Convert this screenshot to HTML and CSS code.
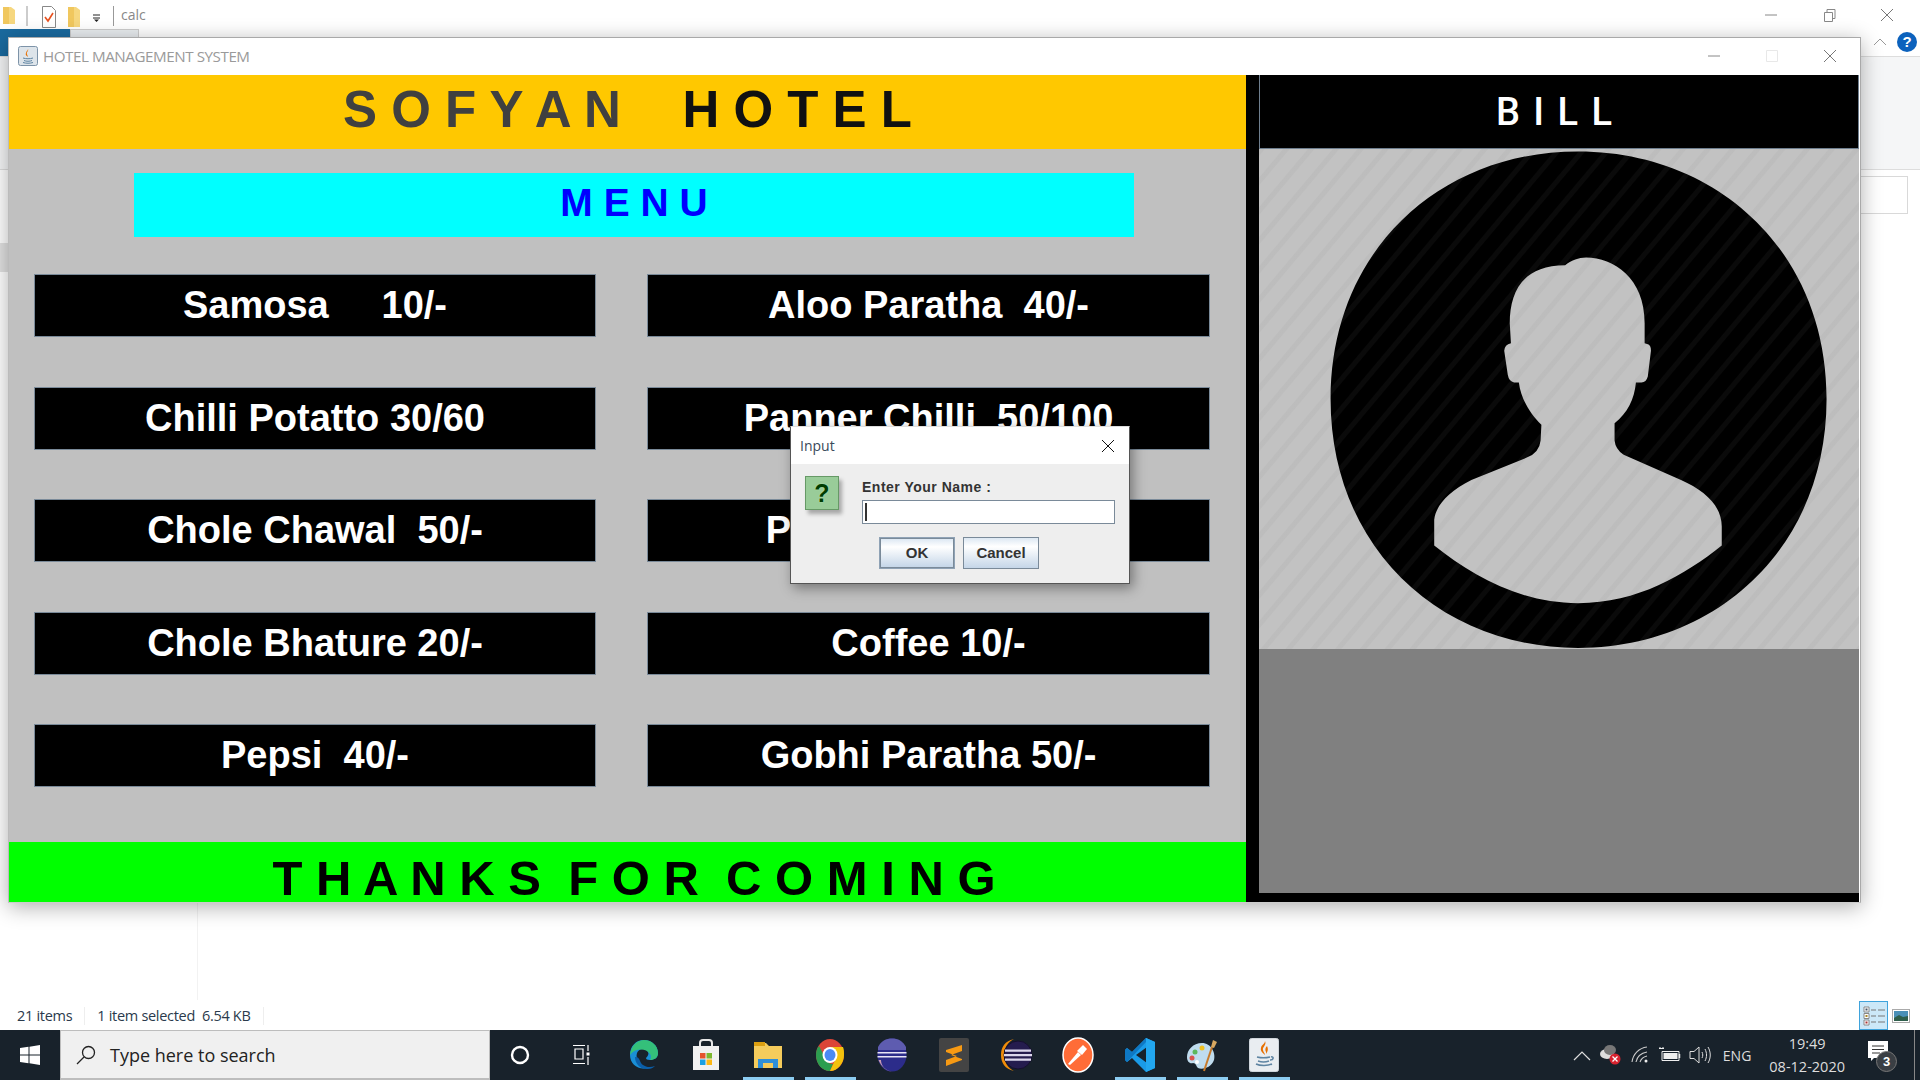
FILE: index.html
```html
<!DOCTYPE html>
<html lang="en">
<head>
<meta charset="utf-8">
<title>HOTEL MANAGEMENT SYSTEM</title>
<link rel="stylesheet" href="styles.css">
</head>
<body>
<div class="screen">
  <div class="explorer">
    <div class="qat">
      <svg class="qat-ico" width="126" height="30" viewBox="0 0 126 30">
        <path d="M3 8h8l4 3v14H3z" fill="#f6d77f"/><path d="M3 8h6v17H3z" fill="#f0c75e"/>
        <path d="M27 7v20" stroke="#999"/>
        <path d="M42.500 7.500h9l4 4v17h-13z" fill="#fff" stroke="#888"/>
        <path d="M45 18l3 4 5-8" fill="none" stroke="#e8501e" stroke-width="1.600"/>
        <path d="M68 8h8l4 3v17H68z" fill="#f6d77f"/><path d="M68 8h6v20h-6z" fill="#f0c75e"/>
        <path d="M93 16h7M93 19h7" stroke="#222"/><path d="M94 20.500h5l-2.500 2.500z" fill="#222"/>
        <path d="M113.500 7v20" stroke="#999"/>
      </svg>
      <span class="qat-name">calc</span>
      <div class="caption">
        <svg width="16" height="16" viewBox="0 0 16 16"><path d="M2 8h12" stroke="#888"/></svg>
        <svg width="16" height="16" viewBox="0 0 16 16"><path d="M3.500 5.500h8v9h-8zM6 5V2.500h8v9h-2" fill="none" stroke="#888"/></svg>
        <svg width="16" height="16" viewBox="0 0 16 16"><path d="M2 2l12 12M14 2L2 14" stroke="#777"/></svg>
      </div>
    </div>
    <div class="ribbon">
      <div class="tab-file"></div>
      <div class="tab-home"></div>
      <div class="ribbon-help">
        <svg width="14" height="10" viewBox="0 0 14 10"><path d="M1 8l6-6 6 6" fill="none" stroke="#999"/></svg>
        <span class="help">?</span>
      </div>
    </div>
    <div class="address"></div>
    <div class="file-pane">
      <div class="nav-pane"><div class="nav-sel"></div></div>
      <div class="file-list"><div class="search-sliver"></div></div>
    </div>
    <div class="status">
      <span class="status-cell">21 items</span>
      <span class="status-cell">1 item selected&nbsp;&nbsp;6.54 KB</span>
      <div class="views">
        <span class="view view-on">
          <svg width="26" height="24" viewBox="0 0 26 24">
            <path d="M3 3h5v5H3zM3 9.500h5v5H3zM3 16h5v5H3z" fill="#fff" stroke="#888"/>
            <path d="M4.500 4.500h2v2h-2z" fill="#456"/><path d="M4.500 11h2v2h-2z" fill="#a82"/><path d="M4.500 17.500h2v2h-2z" fill="#a33"/>
            <path d="M10 6h5M17 6h7M10 12h5M17 12h7M10 18h5M17 18h7" stroke="#777"/>
          </svg>
        </span>
        <span class="view">
          <svg width="18" height="14" viewBox="0 0 18 14">
            <rect x=".5" y=".5" width="17" height="13" fill="#fff" stroke="#aaa"/>
            <rect x="2" y="2" width="14" height="10" fill="#4a90b8"/><path d="M2 9l5-3 4 2 5-1v5H2z" fill="#2f5f4c"/>
          </svg>
        </span>
      </div>
    </div>
  </div>

  <div class="taskbar">
    <div class="start">
      <svg width="20" height="20" viewBox="0 0 20 20"><path d="M0 3l8.500-1.200v7.700H0zM9.500 1.700L20 0v9.500H9.500zM0 10.500h8.500v7.700L0 17zM9.500 10.500H20V20L9.500 18.300z" fill="#fff"/></svg>
    </div>
    <div class="searchbox">
      <svg width="22" height="22" viewBox="0 0 22 22"><circle cx="13.500" cy="8.500" r="6" fill="none" stroke="#222" stroke-width="1.300"/><path d="M9 13l-7 7" stroke="#222" stroke-width="1.300"/></svg>
      <span class="search-text">Type here to search</span>
    </div>
    <div class="slots">
      <span class="slot"><svg width="20" height="20" viewBox="0 0 20 20"><circle cx="10" cy="10" r="8" fill="none" stroke="#fff" stroke-width="2.400"/></svg></span>
      <span class="slot"><svg width="22" height="22" viewBox="0 0 22 22"><path d="M2 1.500h12M4 5h8v10H4zM2 19.500h12M17 1v6M17 13v8" fill="none" stroke="#fff" stroke-width="1.200"/><path d="M15.500 8.500h3v3h-3z" fill="#fff"/></svg></span>
      <span class="slot"><svg width="32" height="32" viewBox="0 0 32 32"><path d="M2 16C2 7 8 1 16 1c8 0 14 6 14 13 0 5-4 7-8 7-3 0-4-1-4-2 2-2 3-4 2-6-2-4-9-4-11 1-2 6 3 14 10 15C10 31 2 25 2 16z" fill="#1a8fd6"/><path d="M2 16C3 6 10 1 16 1c8 0 14 6 14 13 0 5-4 7-8 7 0 0 2-3 0-6-4-6-15-6-20 1z" fill="#34c07a"/><path d="M7 18c0 7 6 13 13 12 3 0 5-1 7-3-5 2-9 1-12-1-4-3-3-9-8-8z" fill="#0b5ea8"/></svg></span>
      <span class="slot"><svg width="32" height="34" viewBox="0 0 32 34"><path d="M10 8V5a3 3 0 013-3h6a3 3 0 013 3v3" fill="none" stroke="#e8e8e8" stroke-width="2"/><path d="M3 8h26v24H3z" fill="#f1f1f1"/><path d="M10 15h5.500v5.500H10z" fill="#e5532d"/><path d="M16.500 15H22v5.500h-5.500z" fill="#7cb82f"/><path d="M10 21.500h5.500V27H10z" fill="#19a0e3"/><path d="M16.500 21.500H22V27h-5.500z" fill="#fdb813"/></svg></span>
      <span class="slot slot-on"><svg width="30" height="28" viewBox="0 0 30 28"><path d="M1 2h12l3 3h13v22H1z" fill="#f5cc5c"/><path d="M1 1h11v4H1z" fill="#dc9f10"/><path d="M5 27v-9h20v9h-5v-5h-10v5z" fill="#2f8fd8"/><path d="M10 27v-5h10v5z" fill="#f5cc5c"/></svg></span>
      <span class="slot slot-on"><svg width="28" height="32" viewBox="0 0 28 32"><ellipse cx="14" cy="16" rx="14" ry="16" fill="#db4437"/><path d="M14 32C6 32 0 25 0 16 0 12 1 9 3 7l8 15c1 2 3 3 6 3l-3 7z" fill="#2b9e4f"/><path d="M14 8h13c1 2 1 5 1 8 0 8-6 16-14 16l6-13c1-3 0-7-6-11z" fill="#f4c20d"/><ellipse cx="14" cy="16" rx="7.500" ry="8" fill="#fff"/><ellipse cx="14" cy="16" rx="5.500" ry="6" fill="#4a8af4"/></svg></span>
      <span class="slot"><svg width="30" height="34" viewBox="0 0 30 34"><ellipse cx="15" cy="17" rx="14.500" ry="16.500" fill="#2c2c8a"/><path d="M1 9C4 3 9 .5 15 .5S26 3 29 9v3H1z" fill="#5e5cb0"/><path d="M.5 14h29v1.600H.5zM.5 18h29v1.600H.5z" fill="#e8e4f4"/><path d="M1.500 22c3 7 8 11 13.500 11.500-7-1-11-6-11-11.500z" fill="#c99cb0"/></svg></span>
      <span class="slot"><svg width="32" height="36" viewBox="0 0 32 36"><rect x="1" y="1" width="30" height="34" rx="2" fill="#444"/><path d="M24 8v6L13 18l11 4v1L8 29v-6l11-4L8 15v-2z" fill="#f89a13"/></svg></span>
      <span class="slot"><svg width="32" height="34" viewBox="0 0 32 34"><path d="M14 1C5 3 1 9 1 17s4 14 13 16C8 30 4 24 4 17S8 4 14 1z" fill="#f08c0a"/><circle cx="18" cy="17" r="14" fill="#251c4e" stroke="#16102e"/><path d="M5 11.500h26v2.300H5zM4 16h28v2.300H4zM5 20.500h26v2.300H5z" fill="#dcd8ec"/></svg></span>
      <span class="slot"><svg width="32" height="36" viewBox="0 0 32 36"><ellipse cx="16" cy="18" rx="15" ry="17" fill="#ff6c37" stroke="#fff" stroke-width="1.500"/><path d="M6 27l10-12 3 3-11 10z" fill="#fff"/><path d="M15 14l6-6 4 4-5 6z" fill="#fff"/></svg></span>
      <span class="slot slot-on"><svg width="30" height="36" viewBox="0 0 30 36"><path d="M21 1l9 4v26l-9 4-14-14-5 4-2-2v-10l2-2 5 4z" fill="#1a9be8"/><path d="M21 1L7 15 2 11 0 13v10l2 2 19-20z" fill="#0e78c4"/><path d="M22 10L11 18l11 8z" fill="#16212b"/><path d="M21 35l9-4V5l-9-4z" fill="#22a7f0"/></svg></span>
      <span class="slot slot-on"><svg width="32" height="34" viewBox="0 0 32 34"><path d="M16 5C7 5 1 12 1 19c0 5 3 7 6 6 3 0 3 3 5 5 4 2 13 0 16-8 2-7-3-17-12-17z" fill="#bfdcee"/><circle cx="9" cy="14" r="2.500" fill="#5cb85c"/><circle cx="16" cy="10" r="2.500" fill="#f0c020"/><circle cx="6" cy="20" r="2.500" fill="#d9534f"/><circle cx="11" cy="24" r="2" fill="#fff"/><path d="M18 33l8-24" stroke="#c77a2a" stroke-width="2"/><path d="M25 9l2-7 4 2-3 6z" fill="#d8a860"/></svg></span>
      <span class="slot slot-on"><svg width="30" height="34" viewBox="0 0 30 34"><rect x=".5" y=".5" width="29" height="33" rx="2" fill="#e9edf1" stroke="#cfd6dc"/><path d="M16 3c2 4-3 6-2 9 0 2 2 3 2 5-2-2-5-4-4-7 0-3 4-4 4-7z" fill="#e76f00"/><path d="M18 8c-2 2-2 4-1 6l0 2c1-2 3-4 1-8z" fill="#e76f00"/><path d="M8 19c4 1 9 1 13 0M9 23c3 1 8 1 11 0M7 26c4 2 12 2 16 0M22 19c3-1 3 3-1 3" fill="none" stroke="#5e84a2" stroke-width="1.500"/></svg></span>
    </div>
    <div class="tray">
      <svg class="tray-ico" width="18" height="12" viewBox="0 0 18 12"><path d="M1 11l8-8 8 8" fill="none" stroke="#ddd" stroke-width="1.200"/></svg>
      <svg class="tray-ico" width="24" height="24" viewBox="0 0 24 24"><ellipse cx="8" cy="11" rx="7" ry="5" fill="#ddd"/><ellipse cx="11" cy="7" rx="6" ry="5" fill="#777"/><circle cx="16" cy="16" r="5.500" fill="#d8232f"/><path d="M13.500 13.500l5 5M18.500 13.500l-5 5" stroke="#fff" stroke-width="1.300"/></svg>
      <svg class="tray-ico" width="20" height="20" viewBox="0 0 20 20"><path d="M1 17C2 9 8 3 16 2M5 17c1-5 5-9 11-10M9 17c1-3 3-5 7-6" fill="none" stroke="#ccc" stroke-width="1.100"/><circle cx="15" cy="16" r="1.500" fill="#eee"/></svg>
      <svg class="tray-ico" width="22" height="16" viewBox="0 0 22 16"><path d="M3 4.500h17v9H3z" fill="#16212b" stroke="#eee"/><path d="M4.500 6h14v6h-14z" fill="#eee"/><path d="M20.500 7v4" stroke="#eee" stroke-width="1.500"/><path d="M0 1.500h5M1 0v2M4 0v2" stroke="#eee"/></svg>
      <svg class="tray-ico" width="22" height="20" viewBox="0 0 22 20"><path d="M1 6.500h4L10 2v16l-5-4.500H1z" fill="none" stroke="#ddd"/><path d="M13 7c1 2 1 4 0 6M16 4c2 4 2 8 0 12M19 2c3 5 3 11 0 16" fill="none" stroke="#ddd"/></svg>
      <span class="lang">ENG</span>
      <div class="clock"><span>19:49</span><span>08-12-2020</span></div>
      <div class="notif">
        <svg width="20" height="20" viewBox="0 0 20 20"><path d="M0 0h20v17H6l-3 3v-3H0z" fill="#fff"/><path d="M4 5h12M4 8.500h12M4 12h8" stroke="#333"/></svg>
        <span class="badge">3</span>
      </div>
    </div>
  </div>

  <div class="window">
    <div class="titlebar">
      <svg width="20" height="20" viewBox="0 0 20 20"><rect x=".5" y=".5" width="19" height="19" rx="2" fill="#dde4ea" stroke="#7d93a8"/><path d="M10 3c1 2-2 3-1 5 0 1 1 2 1 3-1-1-3-2-2-4 0-2 2-2 2-4z" fill="#e76f00"/><path d="M5 12c3 1 7 1 10 0M6 14.500c2 1 6 1 8 0M5 16.500c3 1 7 1 10 0" fill="none" stroke="#5e84a2"/></svg>
      <span class="win-title">HOTEL MANAGEMENT SYSTEM</span>
      <div class="win-caption">
        <svg width="14" height="14" viewBox="0 0 14 14"><path d="M1 7h12" stroke="#888"/></svg>
        <svg width="14" height="14" viewBox="0 0 14 14"><path d="M1.500 1.500h11v11h-11z" fill="none" stroke="#e8e8e8"/></svg>
        <svg width="14" height="14" viewBox="0 0 14 14"><path d="M1 1l12 12M13 1L1 13" stroke="#777"/></svg>
      </div>
    </div>
    <div class="app">
      <div class="left">
        <div class="hotel">S O F Y A N    <b>H O T E L</b></div>
        <div class="body">
          <div class="menu">M E N U</div>
          <div class="items">
            <div class="item">Samosa     10/-</div>
            <div class="item">Aloo Paratha  40/-</div>
            <div class="item">Chilli Potatto 30/60</div>
            <div class="item">Panner Chilli  50/100</div>
            <div class="item">Chole Chawal  50/-</div>
            <div class="item">Palak Paratha 50/-</div>
            <div class="item">Chole Bhature 20/-</div>
            <div class="item">Coffee 10/-</div>
            <div class="item">Pepsi  40/-</div>
            <div class="item">Gobhi Paratha 50/-</div>
          </div>
        </div>
        <div class="thanks">T H A N K S  F O R  C O M I N G</div>
      </div>
      <div class="right">
        <div class="bill">B I L L</div>
        <div class="photo">
          <svg class="avatar" viewBox="23 55 1517 1450" preserveAspectRatio="none">
            <path fill-rule="evenodd" fill="#000" d="M204 780C204 350 480 62 830 62C1180 62 1458 350 1458 780C1458 1210 1180 1502 830 1502C480 1502 204 1210 204 780Z
            M797 392C815 378 830 370 850 370C920 370 998 430 998 560L998 618L1008 622Q1014 626 1014 640L1006 715Q1002 732 990 732L976 732C972 780 955 820 922 850L922 900Q924 925 945 942L1090 1015C1150 1045 1193 1090 1193 1150L1193 1205C1100 1290 980 1372 830 1372C680 1372 560 1290 466 1205L466 1130C470 1090 500 1050 560 1015L700 950Q732 935 735 900L737 855C710 825 685 780 680 732L668 732Q655 730 652 710L643 640Q644 622 660 618L657 560C657 470 690 392 797 392Z"/>
          </svg>
        </div>
        <div class="bill-area"></div>
      </div>
    </div>
  </div>

  <div class="dialog">
    <div class="dlg-title">
      <span>Input</span>
      <svg width="14" height="14" viewBox="0 0 14 14"><path d="M1 1l12 12M13 1L1 13" stroke="#111"/></svg>
    </div>
    <div class="dlg-body">
      <div class="dlg-icon">?</div>
      <div class="dlg-form">
        <div class="dlg-label">Enter Your Name :</div>
        <div class="dlg-input"><i class="caret"></i></div>
        <div class="dlg-buttons">
          <span class="btn btn-focus">OK</span>
          <span class="btn">Cancel</span>
        </div>
      </div>
    </div>
  </div>
</div>
</body>
</html>
```

FILE: styles.css
```css
* { box-sizing: border-box; }
html, body { margin: 0; padding: 0; }
body { font-family: "Liberation Sans", Arial, sans-serif; background: #fff; overflow: hidden; }
.screen { position: relative; width: 1920px; height: 1080px; display: flex; flex-direction: column; }

.explorer { flex: 1; display: flex; flex-direction: column; background: #fff; min-height: 0; }
.qat { height: 29px; display: flex; align-items: center; position: relative; }
.qat-ico { display: block; margin-top: -1px; flex: none; }
.qat-name { font: 14px "Open Sans", sans-serif; color: #888; margin-left: -5px; }
.caption { margin-left: auto; display: flex; gap: 42px; padding-right: 25px; }
.ribbon { height: 28px; display: flex; border-bottom: 1px solid #ddd; }
.tab-file { width: 70px; background: #1a6a9f; }
.tab-home { width: 69px; height: 9px; background: #e8ecef; border: 1px solid #ccc; border-bottom: 0; }
.ribbon-help { margin-left: auto; display: flex; align-items: center; gap: 10px; padding: 0 3px 2px 0; }
.help { width: 20px; height: 20px; border-radius: 50%; background: #0c62bd; color: #fff; font: bold 15px "Liberation Sans", sans-serif; display: flex; align-items: center; justify-content: center; }
.address { height: 113px; flex: none; background: #f5f6f7; border-bottom: 1px solid #ddd; }
.file-pane { flex: 1; display: flex; min-height: 0; }
.nav-pane { width: 198px; flex: none; border-right: 1px solid #f2f2f2; padding-top: 73px; }
.nav-sel { width: 8px; height: 29px; background: #e2e2e2; }
.file-list { flex: 1; display: flex; justify-content: flex-end; padding: 6px 12px 0 0; }
.search-sliver { width: 100px; height: 38px; border: 1px solid #d9d9d9; }
.status { height: 30px; flex: none; display: flex; align-items: center; font: 14.500px "Open Sans", sans-serif; color: #2a3a4c; padding: 1px 0 0 17px; }
.status-cell { padding-right: 12px; margin-right: 12px; border-right: 1px solid #eee; white-space: nowrap; letter-spacing: -.3px; line-height: 18px; }
.views { margin-left: auto; display: flex; align-items: center; gap: 4px; padding-right: 10px; }
.view { display: flex; align-items: center; justify-content: center; }
.view-on { width: 29px; height: 29px; background: #cce8f8; border: 1px solid #3fa3dc; }

.taskbar { height: 50px; flex: none; background: #18222b; display: flex; align-items: stretch; }
.start { width: 60px; display: flex; align-items: center; justify-content: center; }
.searchbox { width: 430px; background: #f0f0f0; border: 1px solid #bdbdbd; border-bottom-width: 2px; display: flex; align-items: center; padding-left: 14px; gap: 13px; }
.search-text { font: 18px "Open Sans", sans-serif; color: #222; }
.slots { display: flex; margin-left: -1px; }
.slot { width: 62px; display: flex; align-items: center; justify-content: center; position: relative; }
.slot-on::after { content: ""; position: absolute; left: 6px; right: 5px; bottom: 0; height: 3px; background: #8ccdf2; }
.tray { margin: 0 5px 0 auto; display: flex; align-items: center; padding-right: 11px; border-right: 1px solid #888; }
.tray-ico { margin-right: 8px; }
.lang { font: 14px "Open Sans", sans-serif; color: #ddd; margin: 0 18px 0 4px; }
.clock { display: flex; flex-direction: column; align-items: center; font: 14.500px/23px "Open Sans", sans-serif; color: #ddd; margin-right: 22px; }
.notif { position: relative; width: 36px; height: 36px; padding-top: 4px; padding-left: 1px; }
.badge { position: absolute; left: 9px; top: 14px; width: 21px; height: 21px; border-radius: 50%; background: #3a3f44; border: 1px solid #777; color: #fff; font: bold 13px/19px "Liberation Sans", sans-serif; text-align: center; }

.window { position: absolute; left: 8px; top: 37px; width: 1853px; height: 866px; background: #000; border: 1px solid #a9a9a9; border-bottom-color: #ccc; border-left-color: #bbb; box-shadow: 0 4px 20px rgba(0,0,0,.32); display: flex; flex-direction: column; }
.titlebar { height: 37px; flex: none; background: #fff; display: flex; align-items: center; padding: 0 0 2px 9px; gap: 5px; }
.win-title { font: 15.200px "Open Sans", sans-serif; color: #9a9a9a; letter-spacing: -.45px; }
.win-caption { margin-left: auto; display: flex; gap: 44px; padding-right: 23px; }
.app { flex: 1; display: flex; min-height: 0; background: #000; border-right: 1px solid #fff; }
.left { width: 1237px; flex: none; display: flex; flex-direction: column; background: #c0c0c0; }
.hotel { height: 74px; flex: none; background: #ffc800; color: #404040; font-weight: bold; font-size: 51px; white-space: pre; display: flex; align-items: center; justify-content: center; padding: 0 0 5px 0; }
.hotel b { color: #111; margin-left: 5px; }
.body { flex: 1; display: flex; flex-direction: column; padding: 24px 0 0 25px; min-height: 0; }
.menu { width: 1000px; height: 64px; margin-left: 100px; background: #00ffff; color: #0000ff; font-weight: bold; font-size: 39px; display: flex; align-items: center; justify-content: center; flex: none; padding-bottom: 4px; }
.items { display: grid; grid-template-columns: 562px 563px; column-gap: 51px; grid-auto-rows: 63px; row-gap: 49.5px; margin-top: 37px; }
.item { background: #000; border: 1px solid #7a8a99; color: #fff; font-weight: bold; font-size: 38px; white-space: pre; display: flex; align-items: center; justify-content: center; }
.thanks { height: 60px; flex: none; background: #00ff00; color: #000; font-weight: bold; font-size: 49px; line-height: 48px; padding: 12px 0 0 13px; white-space: pre; text-align: center; }
.right { flex: 1; padding-left: 13px; display: flex; flex-direction: column; min-width: 0; padding-bottom: 9px; }
.bill { height: 74px; flex: none; color: #fff; font: 500 38px "Roboto", sans-serif; display: flex; align-items: center; justify-content: center; border: 1px solid #6f7f8f; border-top: 0; letter-spacing: 2px; padding-right: 8px; white-space: pre; }
.photo { height: 500px; flex: none; background: #c2c2c2; position: relative; overflow: hidden; }
.photo::after { content: ""; position: absolute; inset: 0; background: repeating-linear-gradient(130deg, rgba(128,128,128,.08) 0 4px, transparent 5px 18px, rgba(128,128,128,.08) 19px); }
.avatar { display: block; width: 100%; height: 100%; }
.bill-area { flex: 1; background: #808080; }

.dialog { position: absolute; left: 790px; top: 426px; width: 340px; height: 158px; background: #eee; border: 1px solid #555; border-top-color: #ddd; box-shadow: 3px 4px 12px rgba(0,0,0,.4); display: flex; flex-direction: column; }
.dlg-title { height: 37px; flex: none; background: #fff; display: flex; align-items: center; justify-content: space-between; padding: 0 14px 0 9px; font: 14px "Open Sans", sans-serif; color: #3a4a5a; }
.dlg-body { flex: 1; display: flex; padding: 12px 14px 0 14px; }
.dlg-icon { width: 34px; height: 34px; flex: none; background: #99cc99; border: 1px solid #669966; box-shadow: 3px 4px 4px rgba(0,0,0,.3); color: #003d00; font: bold 25px/32px "Liberation Sans", sans-serif; text-align: center; text-shadow: 0 0 1px #cfc; }
.dlg-form { flex: 1; margin-left: 23px; display: flex; flex-direction: column; }
.dlg-label { font: bold 14px/22px "Liberation Sans", sans-serif; color: #333; letter-spacing: .5px; }
.dlg-input { height: 24px; margin-top: 2px; background: #fff; border: 1px solid #7a8a99; padding: 2px 0 2px 2px; }
.caret { display: block; width: 2px; height: 100%; background: #333; }
.dlg-buttons { display: flex; gap: 8px; margin: 13px 0 0 17px; }
.btn { width: 76px; height: 32px; border: 1px solid #7a8a99; background: linear-gradient(#dde8f3 0, #fff 28%, #c5d6e8 100%); font: bold 15px/30px "Liberation Sans", sans-serif; color: #333; text-align: center; }
.btn-focus { border-width: 2px; line-height: 28px; outline: 1px solid #8fa2b5; outline-offset: -1px; }
```
